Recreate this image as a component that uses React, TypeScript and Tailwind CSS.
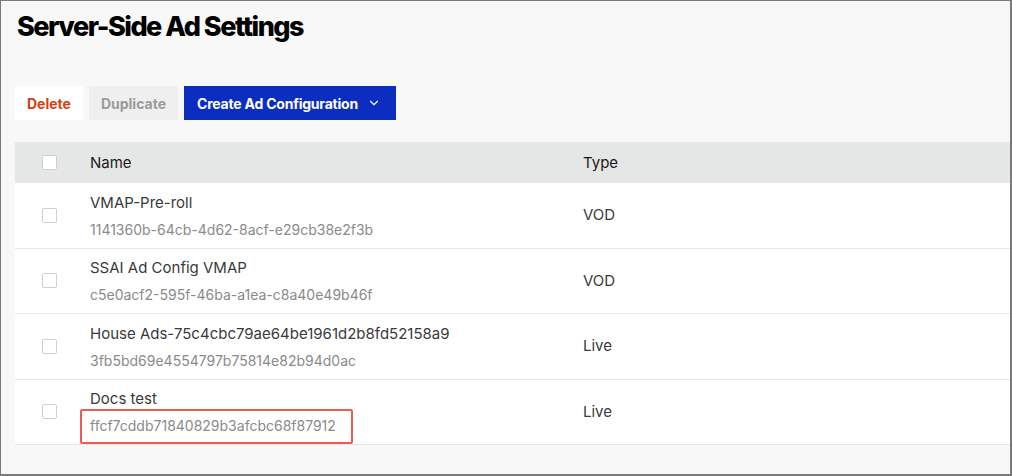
import React from 'react';
import { ChevronDown } from 'lucide-react';

interface AdConfig {
    name: string;
    id: string;
    type: string;
    highlight?: boolean;
}

const configs: AdConfig[] = [
    { name: 'VMAP-Pre-roll', id: '1141360b-64cb-4d62-8acf-e29cb38e2f3b', type: 'VOD' },
    { name: 'SSAI Ad Config VMAP', id: 'c5e0acf2-595f-46ba-a1ea-c8a40e49b46f', type: 'VOD' },
    { name: 'House Ads-75c4cbc79ae64be1961d2b8fd52158a9', id: '3fb5bd69e4554797b75814e82b94d0ac', type: 'Live' },
    { name: 'Docs test', id: 'ffcf7cddb71840829b3afcbc68f87912', type: 'Live', highlight: true },
];

const Checkbox: React.FC = () => (
    <span className="block w-[15px] h-[15px] bg-white border border-[#cfcfcf] rounded-[2px]" />
);

export default function App() {
    return (
        <div
            className="w-[1012px] h-[476px] overflow-hidden bg-[#f8f8f8] border-t border-l border-r-2 border-b-2 border-[#7a7a7a] text-[#333]"
            style={{ fontFamily: 'Inter, "Noto Sans", sans-serif' }}
        >
            <h1 className="pl-[16px] pt-[9px] text-[27px] leading-[34px] font-extrabold tracking-[-0.055em] text-black">
                Server-Side Ad Settings
            </h1>

            <div className="flex gap-[6px] ml-[14px] mt-[42px] h-[34px]">
                <button className="px-[12px] bg-white text-[14px] font-bold text-[#d4400f]">Delete</button>
                <button className="px-[12px] bg-[#efefef] text-[14px] font-bold text-[#9b9b9b]">Duplicate</button>
                <button className="flex items-center pl-[13px] pr-[15px] bg-[#0b2ec0] text-[14px] font-bold tracking-[-0.015em] text-white">
                    Create Ad Configuration
                    <ChevronDown size={14} strokeWidth={2} className="ml-[9px]" />
                </button>
            </div>

            <div className="ml-[14px] mt-[22px]">
                <div className="flex items-center h-[41px] bg-[#e5e6e6] text-[15px] text-[#1a1a1a]">
                    <div className="w-[75px] pl-[27px]">
                        <Checkbox />
                    </div>
                    <div className="w-[493px] pt-[2px]">Name</div>
                    <div className="pt-[2px]">Type</div>
                </div>
                {configs.map((c) => (
                    <div key={c.id} className="flex items-center h-[65.5px] bg-white border-b border-[#e6e6e6]">
                        <div className="w-[75px] pl-[27px]">
                            <Checkbox />
                        </div>
                        <div className="w-[493px] flex flex-col pt-[2px]">
                            <div className="text-[15px] leading-[22px] text-[#3a3a3a]">{c.name}</div>
                            <div className="mt-[3px]">
                                <span className="relative inline-block text-[14px] leading-[22px] text-[#8a8a8a]">
                                    {c.id}
                                    {c.highlight && (
                                        <span className="absolute -left-[10px] -right-[17px] -top-[6px] -bottom-[7px] border-[2.5px] border-[#ef5a51] rounded-[2px]" />
                                    )}
                                </span>
                            </div>
                        </div>
                        <div className="text-[15px] text-[#3a3a3a]">{c.type}</div>
                    </div>
                ))}
            </div>
        </div>
    );
}
